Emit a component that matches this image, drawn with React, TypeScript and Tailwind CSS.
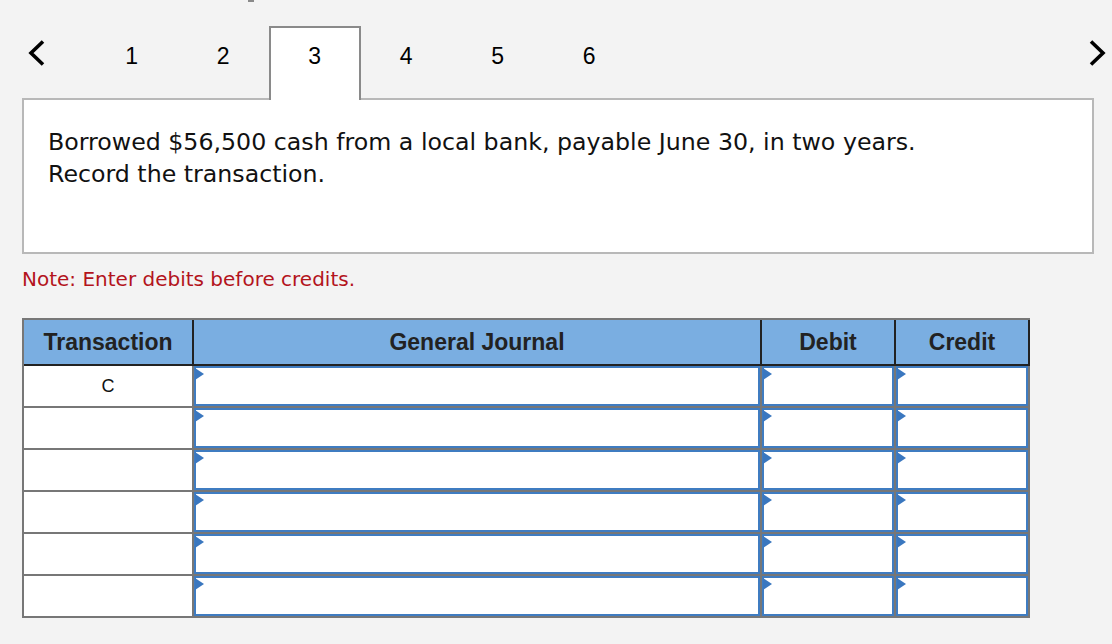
import React from 'react';

const tabs = ['1', '2', '3', '4', '5', '6'];
const ACTIVE = '3';

function Chevron({ dir }: { dir: 'left' | 'right' }) {
  const points = dir === 'left' ? '15,2.5 3,14 15,25.5' : '3,2.5 15,14 3,25.5';
  return (
    <svg width="18" height="28" viewBox="0 0 18 28" className="block">
      <polyline points={points} fill="none" stroke="#000" strokeWidth="3.6" strokeLinejoin="miter" />
    </svg>
  );
}

function InputCell({ width }: { width: string }) {
  return (
    <div className={`${width} h-full relative border-r-2 border-[#777] bg-white`}>
      <div className="h-full w-full border-2 border-[#3f7cc1] bg-white"></div>
      <div className="absolute left-[1px] top-[2px] w-0 h-0 border-l-[9px] border-l-[#3a77bf] border-y-[6px] border-y-transparent"></div>
    </div>
  );
}

export default function App() {
  const rows = ['C', '', '', '', '', ''];

  return (
    <div className="relative min-h-screen w-full bg-[#f3f3f3] font-['Liberation_Sans',Arial,sans-serif] text-black">
      <div className="absolute left-[248px] top-0 w-[6px] h-[2px] bg-[#8a8a8a]"></div>

      <div className="pl-[22px] pt-[26px]">
        {/* step tabs */}
        <div className="relative z-10 flex h-[74px] pr-[6px]">
          <div className="w-[64px] pl-[6px] pt-[13px]">
            <Chevron dir="left" />
          </div>
          {tabs.map((t) =>
            t === ACTIVE ? (
              <div
                key={t}
                className="w-[91.5px] h-full bg-white border-2 border-b-0 border-[#8a8a8a] flex justify-center pt-[15px] text-[23px] leading-[26px]"
              >
                {t}
              </div>
            ) : (
              <div key={t} className="w-[91.5px] h-full flex justify-center pt-[17px] text-[23px] leading-[26px]">
                {t}
              </div>
            )
          )}
          <div className="flex-1"></div>
          <div className="pt-[13px]">
            <Chevron dir="right" />
          </div>
        </div>

        {/* question */}
        <div className="-mt-[2px] w-[1072px] h-[156px] border-2 border-[#b8b8b8] bg-white pt-[26px] pl-[24px] font-['DejaVu_Sans',Verdana,sans-serif] text-[23.7px] leading-[32px] text-[#111]">
          <p>Borrowed $56,500 cash from a local bank, payable June 30, in two years.</p>
          <p>Record the transaction.</p>
        </div>

        <p className="mt-[11px] font-['DejaVu_Sans',Verdana,sans-serif] text-[20px] leading-[28px] text-[#b3141c]">
          Note: Enter debits before credits.
        </p>

        {/* journal table */}
        <div className="mt-[25px] w-[1008px] border-l-2 border-t-2 border-b-2 border-[#777]">
          <div className="flex h-[46px] bg-[#7aaee1] border-b-2 border-[#222] text-[23px] font-bold text-[#222]">
            <div className="w-[170px] border-r-2 border-[#222] flex items-center justify-center">Transaction</div>
            <div className="w-[568px] border-r-2 border-[#222] flex items-center justify-center">General Journal</div>
            <div className="w-[134px] border-r-2 border-[#222] flex items-center justify-center">Debit</div>
            <div className="w-[134px] border-r-2 border-[#222] flex items-center justify-center">Credit</div>
          </div>
          {rows.map((r, i) => (
            <div
              key={i}
              className={i < rows.length - 1 ? 'flex h-[42px] border-b-2 border-[#777]' : 'flex h-[40px]'}
            >
              <div className="w-[170px] h-full border-r-2 border-[#777] bg-white flex items-center justify-center text-[18px] text-[#111]">
                {r}
              </div>
              <InputCell width="w-[568px]" />
              <InputCell width="w-[134px]" />
              <InputCell width="w-[134px]" />
            </div>
          ))}
        </div>
      </div>
    </div>
  );
}
